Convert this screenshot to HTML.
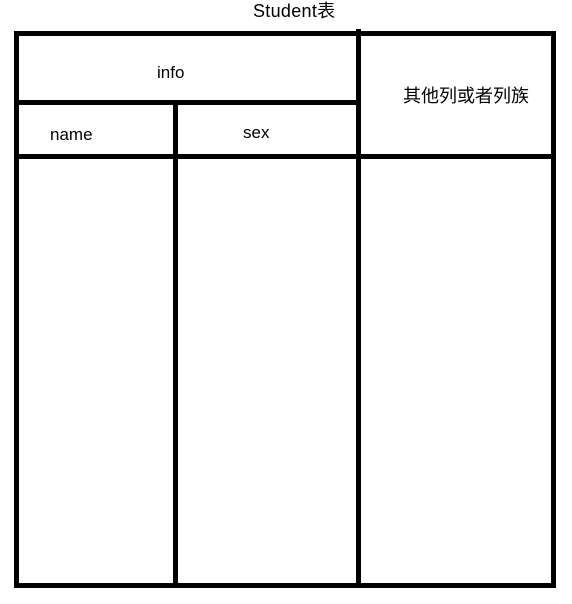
<!DOCTYPE html>
<html><head><meta charset="utf-8"><style>
body{margin:0;width:572px;height:604px;background:#fff;position:relative;overflow:hidden;font-family:"Liberation Sans","Noto Sans CJK SC",sans-serif;font-size:17px;color:#000}
.b{position:absolute;background:#000}
.t{position:absolute;white-space:nowrap;line-height:20px}
</style></head><body>
<div class="t" style="left:253px;top:1px;font-size:18px;letter-spacing:0.3px">Student表</div>
<div class="b" style="left:14px;top:31px;width:542px;height:5px"></div>
<div class="b" style="left:14px;top:583px;width:542px;height:5px"></div>
<div class="b" style="left:14px;top:31px;width:5px;height:557px"></div>
<div class="b" style="left:551px;top:31px;width:5px;height:557px"></div>
<div class="b" style="left:356px;top:29px;width:5px;height:559px"></div>
<div class="b" style="left:173px;top:101px;width:5px;height:487px"></div>
<div class="b" style="left:14px;top:100px;width:347px;height:5px"></div>
<div class="b" style="left:14px;top:154px;width:542px;height:5px"></div>
<div class="t" style="left:157px;top:63px">info</div>
<div class="t" style="left:50px;top:125px">name</div>
<div class="t" style="left:243px;top:123px">sex</div>
<div class="t" style="left:403px;top:86px;font-size:18px">其他列或者列族</div>
</body></html>
